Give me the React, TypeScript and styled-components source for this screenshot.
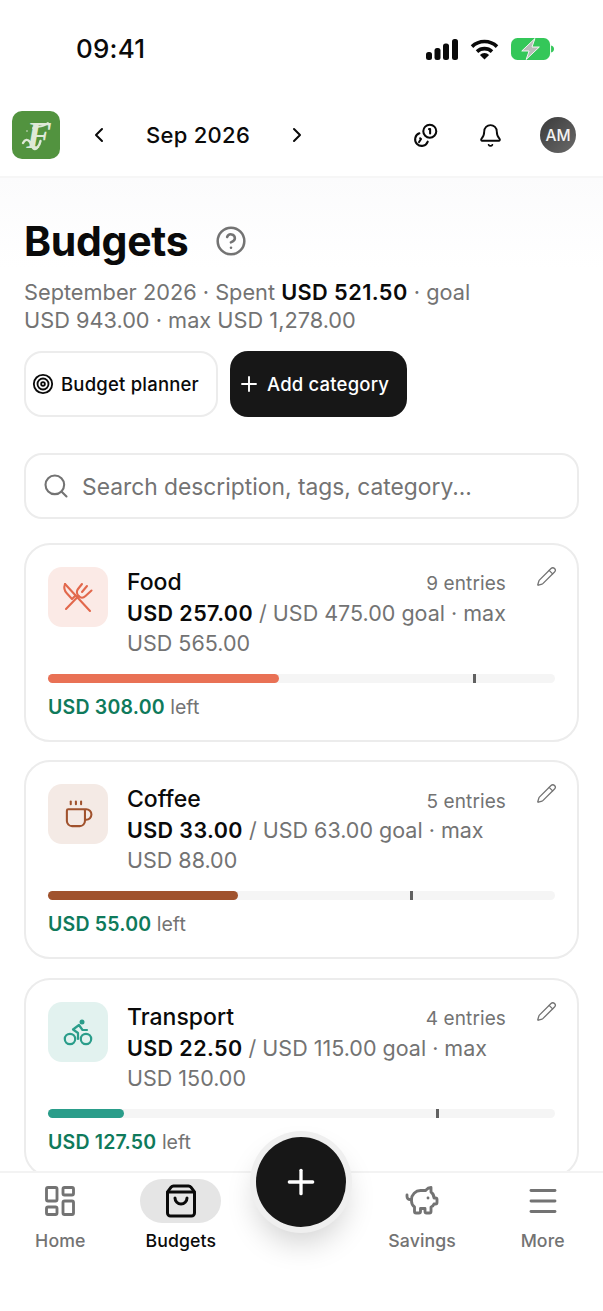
import React from 'react';
import styled, { createGlobalStyle } from 'styled-components';
import { Bell, ChevronLeft, ChevronRight, CircleHelp, Coffee, LayoutDashboard, Menu, Pencil, PiggyBank, Plus, Search, ShoppingBag, Target } from 'lucide-react';

const Global = createGlobalStyle`
  html, body { margin: 0; padding: 0; background: #fff; }
  * { box-sizing: border-box; }
  body { font-family: Inter, "Liberation Sans", sans-serif; color: #0a0a0a; }
`;

const Phone = styled.div`
  position: relative;
  width: 603px;
  height: 1311px;
  display: flex;
  flex-direction: column;
  overflow: hidden;
  background: #fff;
`;

const StatusBar = styled.div`
  height: 90px;
  flex: none;
  padding: 6px 49px 0 76px;
  display: flex;
  align-items: center;
  justify-content: space-between;
`;
const Time = styled.span`
  font-size: 26px;
  font-weight: 500;
  letter-spacing: 0.2px;
`;
const StatusIcons = styled.div`
  display: flex;
  align-items: center;
  gap: 12px;
  padding-top: 2px;
`;

const Header = styled.header`
  height: 88px;
  flex: none;
  display: flex;
  align-items: center;
  padding: 4px 27px 0 12px;
  border-bottom: 2px solid #f6f6f6;
`;
const Logo = styled.div`
  position: relative;
  width: 48px;
  height: 48px;
  border-radius: 10px;
  background: #52933f;
  color: #dfe9d8;
  display: flex;
  align-items: center;
  justify-content: center;
  padding-left: 6px;
  font-family: "Liberation Serif", serif;
  font-style: italic;
  font-weight: 700;
  font-size: 38px;
  line-height: 1;
  svg { position: absolute; left: 0; top: 0; }
`;
const MonthNav = styled.div`
  display: flex;
  align-items: center;
  margin-left: 27px;
  color: #0a0a0a;
`;
const Month = styled.span`
  width: 174px;
  text-align: center;
  font-size: 22px;
  font-weight: 500;
  letter-spacing: 0.3px;
`;
const HeaderRight = styled.div`
  margin-left: auto;
  display: flex;
  align-items: center;
  gap: 37px;
`;
const Avatar = styled.div`
  width: 36px;
  height: 36px;
  border-radius: 50%;
  background: linear-gradient(135deg, #3a3a3a, #6a6a6a);
  color: #f2f2f2;
  font-size: 15.5px;
  font-weight: 500;
  display: flex;
  align-items: center;
  justify-content: center;
`;

const Main = styled.main`
  flex: 1;
  min-height: 0;
  overflow: hidden;
  padding: 38px 24px 0;
  background: linear-gradient(180deg, #fbfbfc 0, #ffffff 90px);
`;
const TitleRow = styled.div`
  display: flex;
  align-items: center;
  gap: 27px;
  height: 50px;
`;
const Title = styled.h1`
  margin: 0;
  font-size: 41px;
  line-height: 50px;
  font-weight: 700;
  letter-spacing: -0.3px;
`;
const Summary = styled.p`
  margin: 13px 0 0;
  font-size: 21.75px;
  line-height: 27.5px;
  color: #737373;
  width: 480px;
  b { color: #0a0a0a; font-weight: 600; letter-spacing: 0.4px; }
`;
const Actions = styled.div`
  display: flex;
  gap: 12px;
  margin-top: 17px;
`;
const Button = styled.button<{ $dark?: boolean }>`
  height: 66px;
  border-radius: 18px;
  border: ${p => (p.$dark ? 'none' : '2px solid #ececec')};
  background: ${p => (p.$dark ? '#171717' : '#fff')};
  color: ${p => (p.$dark ? '#fff' : '#0a0a0a')};
  font-family: inherit;
  font-size: 18.5px;
  font-weight: 500;
  letter-spacing: 0.2px;
  display: flex;
  align-items: center;
  gap: ${p => (p.$dark ? '6px' : '7px')};
  padding: ${p => (p.$dark ? '0 18px 0 7px' : '0 17px 0 6px')};
`;
const SearchBox = styled.div`
  margin-top: 36px;
  height: 66px;
  border: 2px solid #ececec;
  border-radius: 18px;
  display: flex;
  align-items: center;
  gap: 12px;
  padding: 0 16px;
  color: #737373;
  font-size: 22.8px;
`;
const Cards = styled.div`
  margin-top: 23.75px;
  display: flex;
  flex-direction: column;
  gap: 18.5px;
`;
const Card = styled.article`
  border: 2px solid #ececec;
  border-radius: 26px;
  padding: 22px;
  background: #fff;
  height: 199px;
  flex: none;
`;
const CardTop = styled.div`
  display: flex;
  align-items: flex-start;
`;
const IconTile = styled.div<{ $bg: string; $fg: string }>`
  width: 60px;
  height: 60px;
  flex: none;
  border-radius: 14px;
  background: ${p => p.$bg};
  color: ${p => p.$fg};
  display: flex;
  align-items: center;
  justify-content: center;
`;
const CardBody = styled.div`
  width: 384px;
  margin-left: 19px;
`;
const NameRow = styled.div`
  display: flex;
  justify-content: space-between;
  align-items: center;
  height: 31px;
  padding-right: 5px;
`;
const Name = styled.span`
  font-size: 23px;
  font-weight: 500;
  margin-top: -1px;
`;
const Entries = styled.span`
  font-size: 19px;
  color: #737373;
  letter-spacing: 0.1px;
  margin-top: 3px;
`;
const Amounts = styled.div`
  font-size: 21.5px;
  line-height: 30px;
  color: #737373;
  b { color: #0a0a0a; font-weight: 600; letter-spacing: 0.4px; }
`;
const EditButton = styled.div`
  margin-left: auto;
  margin-right: -2px;
  color: #737373;
  height: 22px;
  margin-top: -1px;
`;
const Track = styled.div`
  position: relative;
  height: 9px;
  margin-top: 16px;
  border-radius: 5px;
  background: #f5f5f5;
`;
const Fill = styled.div<{ $color: string }>`
  height: 100%;
  border-radius: 5px;
  background: ${p => p.$color};
`;
const Marker = styled.div`
  position: absolute;
  top: 0;
  width: 3px;
  height: 100%;
  margin-left: -1px;
  background: #606060;
`;
const Left = styled.div`
  margin-top: 11px;
  font-size: 19.5px;
  line-height: 26px;
  color: #737373;
  b { color: #0f7a5b; font-weight: 600; letter-spacing: 0.2px; }
`;

const Nav = styled.nav`
  position: relative;
  flex: none;
  height: 140px;
  background: #fff;
  border-top: 2px solid #f3f3f3;
  display: grid;
  grid-template-columns: repeat(5, 1fr);
`;
const NavItem = styled.div<{ $active?: boolean }>`
  display: flex;
  flex-direction: column;
  align-items: center;
  padding-top: 6px;
  color: ${p => (p.$active ? '#0a0a0a' : '#737373')};
`;
const NavIcon = styled.div<{ $active?: boolean }>`
  width: 81px;
  height: 44px;
  border-radius: 22px;
  background: ${p => (p.$active ? '#e5e5e5' : 'transparent')};
  display: flex;
  align-items: center;
  justify-content: center;
`;
const NavLabel = styled.span`
  margin-top: 5px;
  font-size: 17.7px;
  line-height: 26px;
  font-weight: 500;
  letter-spacing: 0.1px;
`;
const Fab = styled.button`
  position: absolute;
  left: 256px;
  top: -36px;
  width: 90px;
  height: 90px;
  border-radius: 50%;
  border: none;
  background: #171717;
  color: #fff;
  display: flex;
  align-items: center;
  justify-content: center;
  box-shadow: 0 0 0 6px #efefef, 0 16px 30px rgba(0, 0, 0, 0.18);
`;

const LogoSwash = () => (
  <svg width="48" height="48" viewBox="0 0 48 48" fill="none" stroke="#dfe9d8" strokeLinecap="round">
    <path d="M11 32c2-4 5-4 7-1 2 4 3 9 7 6 2-2 3-4 3.500-7" strokeWidth="2.4" />
    <path d="M21 17c4-2 9 0 15-5" strokeWidth="1.8" />
    <circle cx="15" cy="20" r="0.8" fill="#dfe9d8" stroke="none" />
  </svg>
);
const ForkKnife = () => (
  <svg width="34" height="34" viewBox="0 0 34 34" fill="none" stroke="currentColor" strokeWidth="2.1" strokeLinecap="round" strokeLinejoin="round">
    <path d="M4 4 29 31" />
    <path d="M4 4C2.5 8 3.500 11 6 13.500l5 5.500 3.500-3.500" />
    <path d="M5 29 17.500 16" />
    <path d="M17.500 16C15 13 15.500 11 17 9l4-5" />
    <path d="M17.500 16c2.500 2.500 5 2 7 0l6-5.500" />
    <path d="M21 12l5-6" />
  </svg>
);
const BikeRider = () => (
  <svg width="32" height="32" viewBox="0 0 32 32" fill="none" stroke="currentColor" strokeWidth="2.2" strokeLinecap="round" strokeLinejoin="round">
    <circle cx="8" cy="23" r="5.200" />
    <circle cx="24" cy="23" r="5.200" />
    <circle cx="20" cy="6" r="2.500" fill="currentColor" stroke="none" />
    <path d="M16 23v-6l-5-3.500 6-4.500 3.500 5H25" />
  </svg>
);
const CoinPair = () => (
  <svg width="26" height="26" viewBox="0 0 24 24" fill="none" stroke="#0a0a0a" strokeWidth="1.9" strokeLinecap="round" strokeLinejoin="round" style={{ marginRight: 2 }}>
    <circle cx="15.500" cy="8.500" r="6" />
    <path d="M14.800 6.600h1v4" />
    <path d="M5.900 10.400a6 6 0 1 0 7.700 7.700" />
    <path d="m6.600 15 .8.7-1.800 2.800" />
  </svg>
);
const Signal = () => (
  <svg width="32" height="21" viewBox="0 0 32 21" fill="#0a0a0a">
    <rect x="0" y="13" width="6" height="8" rx="2.500" />
    <rect x="8.500" y="9" width="6" height="12" rx="2.500" />
    <rect x="17" y="4.500" width="6" height="16.500" rx="2.500" />
    <rect x="26" y="0" width="6" height="21" rx="2.500" />
  </svg>
);
const Wifi = () => (
  <svg width="29" height="21" viewBox="0 0 29 21" fill="none" stroke="#0a0a0a" strokeWidth="3.600">
    <path d="M2 7.600a18 18 0 0 1 25 0" />
    <path d="M7 12.600a11 11 0 0 1 15 0" />
    <path d="M14.500 20.600 9.900 16a6.500 6.500 0 0 1 9.200 0z" fill="#0a0a0a" stroke="none" />
  </svg>
);
const Battery = () => (
  <svg width="43" height="22" viewBox="0 0 44 22" preserveAspectRatio="none">
    <rect x="0" y="0" width="40" height="22" rx="6.500" fill="#34c759" />
    <path d="M41 7.500c2 .5 3 1.700 3 3.500s-1 3-3 3.500z" fill="#34c759" />
    <path d="M24.500 0.500 11 13h7.500l-3 8.500L29 9h-7.500z" fill="#b9bcb9" stroke="#fff" strokeWidth="0.9" />
  </svg>
);

type Category = {
  name: string; entries: number; spent: number; goal: number; max: number;
  color: string; tile: string; fg: string; icon: React.ReactNode;
};
const money = (n: number) => `USD ${n.toFixed(2)}`;
const categories: Category[] = [
  { name: 'Food', entries: 9, spent: 257, goal: 475, max: 565, color: '#e97155', tile: '#fbeae6', fg: '#e2684c', icon: <ForkKnife /> },
  { name: 'Coffee', entries: 5, spent: 33, goal: 63, max: 88, color: '#a0522d', tile: '#f4eae5', fg: '#a0522d', icon: <Coffee size={31} strokeWidth={1.6} /> },
  { name: 'Transport', entries: 4, spent: 22.5, goal: 115, max: 150, color: '#2a9d8a', tile: '#e2f2ef', fg: '#2a9d8a', icon: <BikeRider /> },
];

export default function App() {
  return (
    <Phone>
      <Global />
      <StatusBar>
        <Time>09:41</Time>
        <StatusIcons>
          <Signal />
          <Wifi />
          <Battery />
        </StatusIcons>
      </StatusBar>
      <Header>
        <Logo><LogoSwash />F</Logo>
        <MonthNav>
          <ChevronLeft size={24} strokeWidth={2} />
          <Month>Sep 2026</Month>
          <ChevronRight size={24} strokeWidth={2} />
        </MonthNav>
        <HeaderRight>
          <CoinPair />
          <Bell size={25} strokeWidth={1.8} />
          <Avatar>AM</Avatar>
        </HeaderRight>
      </Header>
      <Main>
        <TitleRow>
          <Title>Budgets</Title>
          <CircleHelp size={32} strokeWidth={1.9} color="#737373" />
        </TitleRow>
        <Summary>
          September 2026 · Spent <b>USD 521.50</b> · goal USD 943.00 · max USD 1,278.00
        </Summary>
        <Actions>
          <Button>
            <Target size={22} strokeWidth={2} />
            Budget planner
          </Button>
          <Button $dark>
            <Plus size={24} strokeWidth={1.9} />
            Add category
          </Button>
        </Actions>
        <SearchBox>
          <Search size={28} strokeWidth={1.8} />
          Search description, tags, category...
        </SearchBox>
        <Cards>
          {categories.map(c => (
            <Card key={c.name}>
              <CardTop>
                <IconTile $bg={c.tile} $fg={c.fg}>{c.icon}</IconTile>
                <CardBody>
                  <NameRow>
                    <Name>{c.name}</Name>
                    <Entries>{c.entries} entries</Entries>
                  </NameRow>
                  <Amounts>
                    <b>{money(c.spent)}</b> / {money(c.goal)} goal · max {money(c.max)}
                  </Amounts>
                </CardBody>
                <EditButton><Pencil size={21} strokeWidth={1.5} /></EditButton>
              </CardTop>
              <Track>
                <Fill $color={c.color} style={{ width: `${(c.spent / c.max) * 100}%` }} />
                <Marker style={{ left: `${(c.goal / c.max) * 100}%` }} />
              </Track>
              <Left><b>{money(c.max - c.spent)}</b> left</Left>
            </Card>
          ))}
        </Cards>
      </Main>
      <Nav>
        <NavItem><NavIcon><LayoutDashboard size={36} strokeWidth={1.9} /></NavIcon><NavLabel>Home</NavLabel></NavItem>
        <NavItem $active><NavIcon $active><ShoppingBag size={36} strokeWidth={2} /></NavIcon><NavLabel>Budgets</NavLabel></NavItem>
        <div />
        <NavItem><NavIcon><PiggyBank size={36} strokeWidth={1.9} /></NavIcon><NavLabel>Savings</NavLabel></NavItem>
        <NavItem><NavIcon><Menu size={36} strokeWidth={1.9} /></NavIcon><NavLabel>More</NavLabel></NavItem>
        <Fab><Plus size={40} strokeWidth={2} /></Fab>
      </Nav>
    </Phone>
  );
}
